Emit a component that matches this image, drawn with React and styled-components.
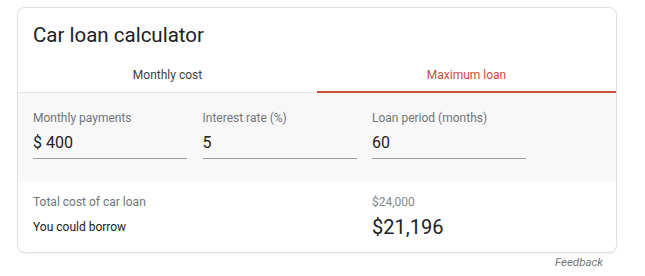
import React, { useState } from 'react'
import styled, { createGlobalStyle } from 'styled-components'

const GlobalStyle = createGlobalStyle`
  body {
    margin: 0;
    background: #fff;
    font-family: Roboto, "Liberation Sans", Arial, sans-serif;
  }
`

const Page = styled.div`
  width: 600px;
  padding: 7px 0 0 17px;
`

const Card = styled.div`
  border: 1px solid #dfe1e5;
  border-radius: 8px;
  box-shadow: 0 1px 2px rgba(60, 64, 67, 0.08);
  overflow: hidden;
  background: #fff;
`

const Title = styled.h2`
  margin: 0;
  padding: 15px 15px 0;
  font-size: 20.5px;
  line-height: 24px;
  font-weight: 400;
  color: #202124;
`

const TabRow = styled.div`
  display: grid;
  grid-template-columns: 1fr 1fr;
  margin-top: 9px;
  border-bottom: 1px solid #e3e3e3;
`

const Tab = styled.div`
  height: 37px;
  margin-bottom: -1px;
  padding-top: 3px;
  box-sizing: border-box;
  display: flex;
  align-items: center;
  justify-content: center;
  font-size: 12px;
  color: ${p => (p.$active ? '#d14a3b' : '#3c4043')};
  border-bottom: 2px solid ${p => (p.$active ? '#c9503d' : 'transparent')};
  cursor: pointer;
`

const Inputs = styled.div`
  background: #f8f8f8;
  padding: 17px 15px 23px;
  display: grid;
  grid-template-columns: repeat(3, 154px);
  column-gap: 15.5px;
`

const Field = styled.label`
  display: flex;
  flex-direction: column;
`

const FieldLabel = styled.span`
  font-size: 12px;
  line-height: 16px;
  color: #70757a;
`

const FieldValue = styled.span`
  margin-top: 7px;
  padding-bottom: 5px;
  font-size: 16px;
  line-height: 20px;
  color: #202124;
  border-bottom: 1px solid #9aa0a6;
`

const Results = styled.div`
  padding: 12px 15px 11px;
  display: grid;
  grid-template-columns: 339px 1fr;
  row-gap: 3px;
  align-items: center;
`

const ResultLabel = styled.span`
  font-size: 12px;
  line-height: 16px;
  color: ${p => (p.$strong ? '#202124' : '#70757a')};
`

const ResultValue = styled.span`
  font-size: ${p => (p.$big ? '20px' : '12px')};
  line-height: ${p => (p.$big ? '28px' : '16px')};
  color: ${p => (p.$big ? '#202124' : '#80868b')};
`

const Feedback = styled.div`
  margin-top: 1px;
  padding-right: 14px;
  text-align: right;
  font-size: 11.5px;
  line-height: 16px;
  font-style: italic;
  color: #70757a;
`

const App = () => {
  const [tab, setTab] = useState(1)

  return (
    <Page>
      <GlobalStyle />
      <Card>
        <Title>Car loan calculator</Title>
        <TabRow>
          <Tab $active={tab === 0} onClick={() => setTab(0)}>Monthly cost</Tab>
          <Tab $active={tab === 1} onClick={() => setTab(1)}>Maximum loan</Tab>
        </TabRow>
        <Inputs>
          <Field>
            <FieldLabel>Monthly payments</FieldLabel>
            <FieldValue>$ 400</FieldValue>
          </Field>
          <Field>
            <FieldLabel>Interest rate (%)</FieldLabel>
            <FieldValue>5</FieldValue>
          </Field>
          <Field>
            <FieldLabel>Loan period (months)</FieldLabel>
            <FieldValue>60</FieldValue>
          </Field>
        </Inputs>
        <Results>
          <ResultLabel>Total cost of car loan</ResultLabel>
          <ResultValue>$24,000</ResultValue>
          <ResultLabel $strong>You could borrow</ResultLabel>
          <ResultValue $big>$21,196</ResultValue>
        </Results>
      </Card>
      <Feedback>Feedback</Feedback>
    </Page>
  )
}

export default App
